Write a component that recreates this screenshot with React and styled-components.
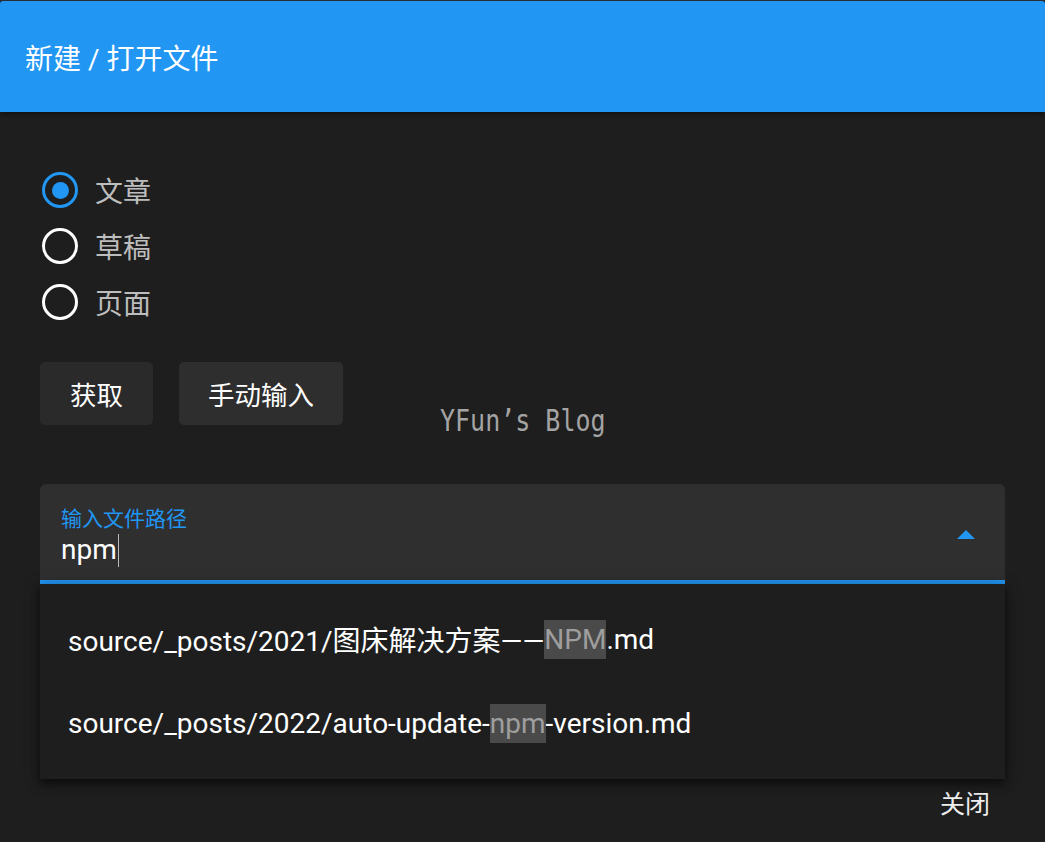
import React from 'react'
import styled, { createGlobalStyle } from 'styled-components';

const GlobalStyle = createGlobalStyle`
    html, body {
        margin: 0;
        padding: 0;
        background: #1e1e1e;
    }
    body {
        font-family: Roboto, "Noto Sans CJK SC", sans-serif;
    }
`;

const TopStrip = styled.div`
    height: 1px;
    background: #2a2d33;
`;

const Dialog = styled.div`
    width: 1045px;
    height: 841px;
    background: #1e1e1e;
    display: flex;
    flex-direction: column;
    position: relative;
    overflow: hidden;
`;

const Header = styled.div`
    height: 111px;
    background: #2196f3;
    border-radius: 3px 3px 0 0;
    display: flex;
    align-items: center;
    padding: 0 25px;
    color: #fff;
    font-size: 28px;
    box-shadow: 0 2px 6px rgba(0, 0, 0, 0.5);
    z-index: 1;
`;

const Body = styled.div`
    padding: 60px 40px 0;
    display: flex;
    flex-direction: column;
    flex: 1;
`;

const RadioGroup = styled.div`
    display: flex;
    flex-direction: column;
    gap: 20px;
`;

const RadioRow = styled.label`
    display: flex;
    align-items: center;
    height: 36px;
    gap: 17px;
    padding-left: 2px;
    color: #bdbdbd;
    font-size: 28px;
`;

const RadioCircle = styled.span`
    box-sizing: border-box;
    width: 36px;
    height: 36px;
    border-radius: 50%;
    border: 3.5px solid ${p => (p.checked ? '#2196f3' : '#ffffff')};
    display: flex;
    align-items: center;
    justify-content: center;

    &::after {
        content: '';
        display: ${p => (p.checked ? 'block' : 'none')};
        width: 17px;
        height: 17px;
        border-radius: 50%;
        background: #2196f3;
    }
`;

const ButtonRow = styled.div`
    display: flex;
    gap: 26px;
    margin-top: 42px;
    position: relative;
`;

const Button = styled.button`
    height: 63px;
    padding: 0 ${p => p.pad || 30}px;
    background: ${p => p.bg || '#2a2a2a'};
    border: none;
    border-radius: 5px;
    color: #fff;
    font-family: Roboto, "Noto Sans CJK SC", sans-serif;
    font-size: 26.5px;
`;

const Watermark = styled.div`
    position: absolute;
    left: 400px;
    top: 44px;
    font-family: "DejaVu Sans Mono", monospace;
    font-size: 25px;
    color: #a4a4a4;
    transform: scaleY(1.22);
    transform-origin: left center;
`;

const FieldWrap = styled.div`
    margin-top: 59px;
    position: relative;
`;

const Field = styled.div`
    height: 96px;
    background: #2f2f2f;
    border-radius: 6px 6px 0 0;
    border-bottom: 4px solid #2196f3;
    display: flex;
    align-items: center;
    justify-content: space-between;
    padding: 0 30px 0 21px;
`;

const FieldText = styled.div`
    display: flex;
    flex-direction: column;
    padding-top: 12px;
`;

const FieldLabel = styled.div`
    color: #2196f3;
    font-size: 21px;
    line-height: 24px;
`;

const FieldValue = styled.div`
    color: #fff;
    font-size: 28px;
    line-height: 38px;
    display: flex;
    align-items: center;
`;

const Caret = styled.span`
    display: inline-block;
    width: 1px;
    height: 33px;
    background: #bbb;
    margin-left: 1px;
`;

const Arrow = styled.div`
    width: 0;
    height: 0;
    border-left: 9px solid transparent;
    border-right: 9px solid transparent;
    border-bottom: 9px solid #2196f3;
    margin-top: 4px;
`;

const Menu = styled.div`
    position: absolute;
    left: 0;
    right: 0;
    top: 100%;
    background: #1e1e1e;
    padding: 13px 0 14px;
    box-shadow: 0 5px 8px rgba(0, 0, 0, 0.45), 0 2px 16px rgba(0, 0, 0, 0.3);
    z-index: 2;
`;

const MenuItem = styled.div`
    height: 84px;
    display: flex;
    align-items: center;
    padding-left: 28px;
    color: #fff;
    font-size: 28px;
`;

const Mark = styled.span`
    background: #4a4a4a;
    color: #9e9e9e;
    padding: 3px 0;
`;

const Footer = styled.div`
    position: absolute;
    right: 55px;
    bottom: 22px;
    color: #eee;
    font-size: 25px;
`;

const radios = [
    { label: '文章', checked: true },
    { label: '草稿', checked: false },
    { label: '页面', checked: false },
];

export default function App() {
    return (
        <>
            <GlobalStyle />
            <TopStrip />
            <Dialog>
                <Header>新建 / 打开文件</Header>
                <Body>
                    <RadioGroup>
                        {radios.map(r => (
                            <RadioRow key={r.label}>
                                <RadioCircle checked={r.checked} />
                                {r.label}
                            </RadioRow>
                        ))}
                    </RadioGroup>

                    <ButtonRow>
                        <Button>获取</Button>
                        <Button pad={29} bg="#2e2e2e">手动输入</Button>
                        <Watermark>YFun’s Blog</Watermark>
                    </ButtonRow>

                    <FieldWrap>
                        <Field>
                            <FieldText>
                                <FieldLabel>输入文件路径</FieldLabel>
                                <FieldValue>npm<Caret /></FieldValue>
                            </FieldText>
                            <Arrow />
                        </Field>
                        <Menu>
                            <MenuItem>source/_posts/2021/图床解决方案——<Mark>NPM</Mark>.md</MenuItem>
                            <MenuItem>source/_posts/2022/auto-update-<Mark>npm</Mark>-version.md</MenuItem>
                        </Menu>
                    </FieldWrap>
                </Body>
                <Footer>关闭</Footer>
            </Dialog>
        </>
    )
}
